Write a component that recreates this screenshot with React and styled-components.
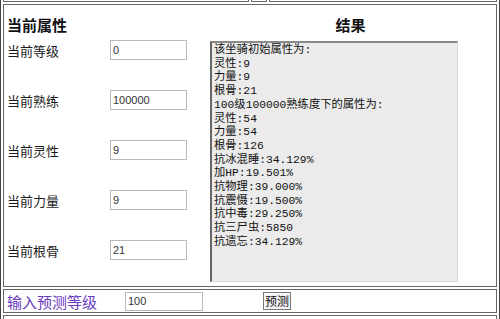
import styled, { createGlobalStyle } from "styled-components";

const GlobalStyle = createGlobalStyle`
    html, body {
        margin: 0;
        padding: 0;
        background: #fff;
        overflow: hidden;
    }
    body {
        font-family: "Noto Sans CJK SC", "Liberation Sans", sans-serif;
        color: #1a1a1a;
    }
`;

const Frame = styled.div`
    width: 494px;
    border-left: 1px solid #444;
    border-right: 1px solid #444;
    padding: 0 2px;
    display: flex;
    flex-direction: column;
    gap: 2px;
`;

const TopStrip = styled.div`
    display: flex;
    gap: 2px;
    height: 2px;
`;

const StripCell = styled.div`
    width: ${(p) => p.$w}px;
    flex: ${(p) => (p.$w ? "none" : "1")};
    border: 1px solid #666;
    border-top: none;
`;

const Cell = styled.div`
    border: 1px solid #666;
    border-bottom: ${(p) => (p.$open ? "none" : "1px solid #666")};
    height: ${(p) => p.$h}px;
    display: flex;
    align-items: ${(p) => p.$align || "stretch"};
`;

const LeftCol = styled.div`
    width: 203px;
    padding: 5px 0 0 3px;
    box-sizing: border-box;
`;

const RightCol = styled.div`
    flex: 1;
    padding-top: 5px;
    display: flex;
    flex-direction: column;
`;

const Heading = styled.div`
    height: 30px;
    line-height: 30px;
    font-size: 15px;
    font-weight: bold;
    color: #111;
    text-align: ${(p) => p.$align || "left"};
    padding-right: ${(p) => (p.$align === "center" ? "2px" : "0")};
`;

const Fields = styled.div`
    display: flex;
    flex-direction: column;
    gap: 30px;
`;

const FieldRow = styled.div`
    display: flex;
    align-items: center;
    height: 20px;
`;

const Label = styled.span`
    width: 103px;
    font-size: 13px;
    color: #1a1a1a;
`;

const TextInput = styled.input`
    width: ${(p) => p.$w || 77}px;
    height: ${(p) => p.$h || 20}px;
    box-sizing: border-box;
    border: 1px solid #b9b9b9;
    padding: 0 2px;
    margin: 0;
    font-family: "Liberation Sans", Arial, sans-serif;
    font-size: 11px;
    color: #333;
    background: #fff;
    outline: none;
`;

const ResultBox = styled.div`
    margin: 1px 0 0 3px;
    width: 248px;
    height: 241px;
    box-sizing: border-box;
    background: #ebebeb;
    border-left: 2px solid #666;
    border-top: 2px solid #8a8a8a;
    border-right: 1px solid #d8d8d8;
    border-bottom: 1px solid #d8d8d8;
    padding: 1px 0 0 2px;
    white-space: pre;
    font-family: "Liberation Mono", "Noto Sans CJK SC", monospace;
    font-size: 11.3px;
    line-height: 13.7px;
    color: #111;
`;

const PredictLabel = styled.span`
    width: 118px;
    padding-left: 3px;
    font-size: 15px;
    color: #6a3cc0;
`;

const PredictButton = styled.button`
    margin-left: 60px;
    width: 28px;
    height: 18px;
    padding: 0;
    font-family: "Noto Sans CJK SC", sans-serif;
    font-size: 12px;
    line-height: 16px;
    color: #111;
    background: #f2f2f2;
    border: 1px solid #777;
    box-shadow: inset 1px 1px 0 #fff;
`;

const fields = [
    ["当前等级", "0"],
    ["当前熟练", "100000"],
    ["当前灵性", "9"],
    ["当前力量", "9"],
    ["当前根骨", "21"],
];

const result = [
    "该坐骑初始属性为:",
    "灵性:9",
    "力量:9",
    "根骨:21",
    "100级100000熟练度下的属性为:",
    "灵性:54",
    "力量:54",
    "根骨:126",
    "抗冰混睡:34.129%",
    "加HP:19.501%",
    "抗物理:39.000%",
    "抗震慑:19.500%",
    "抗中毒:29.250%",
    "抗三尸虫:5850",
    "抗遗忘:34.129%",
].join("\n");

export default function App() {
    return (
        <>
            <GlobalStyle />
            <Frame>
                <TopStrip>
                    <StripCell $w={244} />
                    <StripCell $w={14} />
                    <StripCell />
                </TopStrip>
                <Cell $h={281}>
                    <LeftCol>
                        <Heading>当前属性</Heading>
                        <Fields>
                            {fields.map(([label, value]) => (
                                <FieldRow key={label}>
                                    <Label>{label}</Label>
                                    <TextInput defaultValue={value} />
                                </FieldRow>
                            ))}
                        </Fields>
                    </LeftCol>
                    <RightCol>
                        <Heading $align="center">结果</Heading>
                        <ResultBox>{result}</ResultBox>
                    </RightCol>
                </Cell>
                <Cell $h={22} $align="center">
                    <PredictLabel>输入预测等级</PredictLabel>
                    <TextInput $w={78} $h={19} defaultValue="100" />
                    <PredictButton>预测</PredictButton>
                </Cell>
                <Cell $h={3} $open />
            </Frame>
        </>
    );
}
